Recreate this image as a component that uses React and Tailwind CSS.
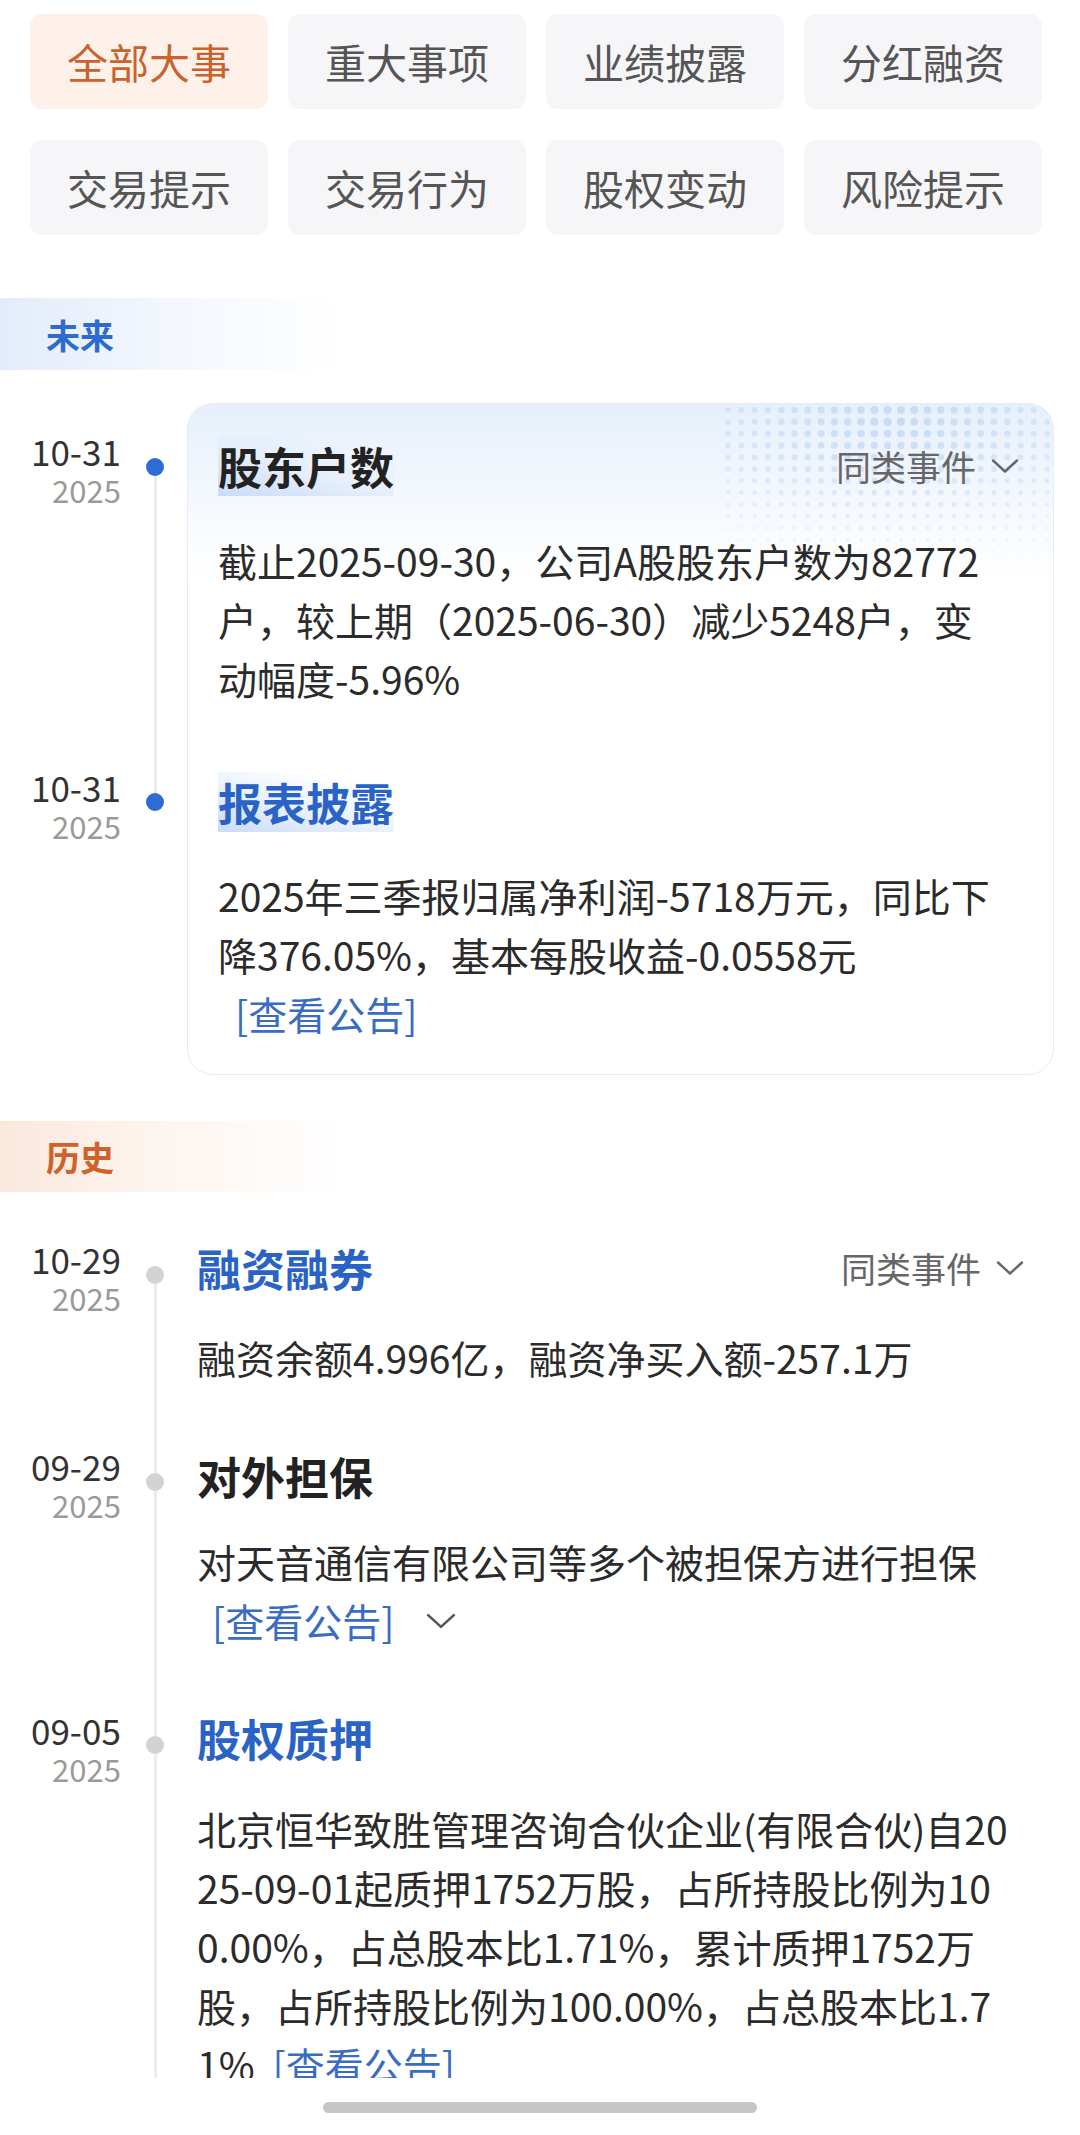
import React from "react";

const tabs = [
  ["全部大事", true],
  ["重大事项"],
  ["业绩披露"],
  ["分红融资"],
  ["交易提示"],
  ["交易行为"],
  ["股权变动"],
  ["风险提示"],
];

function Chevron({ className }) {
  return (
    <svg className={className} viewBox="0 0 28 16" fill="none">
      <polyline points="2,2.5 14,13.5 26,2.5" stroke="currentColor" strokeWidth="2.4" strokeLinecap="round" strokeLinejoin="round" />
    </svg>
  );
}

function DotField() {
  const dots = [];
  const cx = 705;
  const cy = 14;
  for (let row = 0; row < 16; row++) {
    for (let col = 0; col < 30; col++) {
      const x = 540 + col * 13.3;
      const y = 6 + row * 11.8;
      const dx = (x - cx) / 330;
      const dy = (y - cy) / 150;
      const d = Math.sqrt(dx * dx + dy * dy);
      if (d > 1) continue;
      const f = 1 - d;
      const r = 1.5 + 2.6 * f;
      dots.push(<circle key={row + "-" + col} cx={x} cy={y} r={r} fill="#bed5f2" opacity={0.1 + 0.7 * f} />);
    }
  }
  return (
    <svg className="absolute top-0 left-0 w-[867px] h-[220px] pointer-events-none" viewBox="0 0 867 220">
      {dots}
    </svg>
  );
}

function DateCell({ md, row, pt }) {
  return (
    <div className={`col-start-1 ${row} pl-[31px] ${pt}`}>
      <div className="inline-flex flex-col items-end">
        <span className="text-[35px] leading-[38px] text-[#333]">{md}</span>
        <span className="text-[31px] leading-[40px] text-[#9a9a9a]">2025</span>
      </div>
    </div>
  );
}

function Link({ className = "" }) {
  return <span className={`text-[#3a6dc2] ${className}`}>[查看公告]</span>;
}

function Similar() {
  return (
    <div className="flex items-center text-[#666] text-[35px] leading-[60px]">
      <span>同类事件</span>
      <Chevron className="w-[28px] h-[16px] ml-[15px] text-[#666]" />
    </div>
  );
}

function Lines({ lines }) {
  return (
    <div className="text-[39px] leading-[59px] text-[#2b2b2b]">
      {lines.map((l, i) => (
        <div key={i} className="whitespace-nowrap">
          {l}
        </div>
      ))}
    </div>
  );
}

function HighlightTitle({ children, blue }) {
  return (
    <span
      className={`inline-block text-[44px] leading-[60px] font-bold bg-[linear-gradient(15deg,#c9dcf7_0%,rgba(220,232,250,0.55)_45%,rgba(255,255,255,0)_80%)] ${
        blue ? "text-[#2a63c6]" : "text-[#222]"
      }`}
    >
      {children}
    </span>
  );
}

export default function App() {
  return (
    <div className="w-[1080px] h-[2135px] bg-white overflow-hidden flex flex-col font-['Noto_Sans_CJK_SC','Noto_Sans',sans-serif]">
      <div className="h-[2078px] shrink-0 overflow-hidden">
        {/* tabs */}
        <div className="pt-[14px] pl-[30px] pr-[38px] grid grid-cols-4 gap-x-[20px] gap-y-[31px]">
          {tabs.map(([t, active]) => (
            <div
              key={t}
              className={`h-[95px] rounded-[12px] flex items-center justify-center text-[41px] ${
                active ? "bg-[#fdf1e9] text-[#c9622c]" : "bg-[#f6f6f8] text-[#555]"
              }`}
            >
              {t}
            </div>
          ))}
        </div>

        {/* future band */}
        <div className="mt-[63px] h-[72px] w-[340px] pl-[46px] flex items-center bg-[linear-gradient(90deg,#e3ecfa_0%,rgba(236,242,252,0.7)_45%,rgba(255,255,255,0)_100%)]">
          <span className="text-[34px] font-bold text-[#2d6bcf]">未来</span>
        </div>

        {/* future timeline */}
        <div className="mt-[33px] grid grid-cols-[125px_62px_1fr] pr-[26px]">
          <div className="col-start-3 row-start-1 row-span-2 relative rounded-[26px] border-[1.5px] border-[#e7ecf3] overflow-hidden bg-[linear-gradient(180deg,#e6effb_0%,#f2f7fd_12%,#ffffff_26%)]">
            <DotField />
          </div>

          <DateCell md="10-31" row="row-start-1" pt="pt-[29px]" />
          <div className="col-start-2 row-start-1 pt-[55px] flex">
            <div className="ml-[21px] w-[18px] flex flex-col items-center">
              <div className="w-[18px] h-[18px] rounded-full bg-[#2f6bd6] shrink-0" />
              <div className="w-[3px] flex-1 bg-[#ececec]" />
            </div>
          </div>
          <div className="col-start-3 row-start-1 relative pt-[33px] pl-[31px] pr-[35px]">
            <div className="flex justify-between items-center h-[60px]">
              <HighlightTitle>股东户数</HighlightTitle>
              <Similar />
            </div>
            <div className="mt-[35px]">
              <Lines
                lines={[
                  "截止2025-09-30，公司A股股东户数为82772",
                  "户，较上期（2025-06-30）减少5248户，变",
                  "动幅度-5.96%",
                ]}
              />
            </div>
          </div>

          <DateCell md="10-31" row="row-start-2" pt="pt-[60px]" />
          <div className="col-start-2 row-start-2 flex">
            <div className="ml-[21px] w-[18px] flex flex-col items-center">
              <div className="w-[3px] h-[85px] bg-[#ececec]" />
              <div className="w-[18px] h-[18px] rounded-full bg-[#2f6bd6] shrink-0" />
            </div>
          </div>
          <div className="col-start-3 row-start-2 relative pt-[64px] pl-[31px] pr-[35px] pb-[32px]">
            <div className="flex items-center h-[60px]">
              <HighlightTitle blue>报表披露</HighlightTitle>
            </div>
            <div className="mt-[34px]">
              <Lines
                lines={[
                  "2025年三季报归属净利润-5718万元，同比下",
                  "降376.05%，基本每股收益-0.0558元",
                  <Link className="ml-[17px]" />,
                ]}
              />
            </div>
          </div>
        </div>

        {/* history band */}
        <div className="mt-[46px] h-[71px] w-[340px] pl-[46px] flex items-center bg-[linear-gradient(90deg,#fbe8dc_0%,rgba(252,240,232,0.7)_45%,rgba(255,255,255,0)_100%)]">
          <span className="text-[34px] font-bold text-[#d0612a]">历史</span>
        </div>

        {/* history timeline */}
        <div className="grid grid-cols-[125px_72px_1fr] pr-[56px]">
          {/* row 1 */}
          <DateCell md="10-29" row="row-start-1" pt="pt-[48px]" />
          <div className="col-start-2 row-start-1 pt-[74px] flex">
            <div className="ml-[21px] w-[18px] flex flex-col items-center">
              <div className="w-[18px] h-[18px] rounded-full bg-[#d3d3d3] shrink-0" />
              <div className="w-[3px] flex-1 bg-[#ececec]" />
            </div>
          </div>
          <div className="col-start-3 row-start-1 pt-[46px]">
            <div className="flex justify-between items-center h-[60px]">
              <span className="text-[44px] leading-[60px] font-bold text-[#2a63c6]">融资融券</span>
              <Similar />
            </div>
            <div className="mt-[30px]">
              <Lines lines={["融资余额4.996亿，融资净买入额-257.1万"]} />
            </div>
          </div>

          {/* row 2 */}
          <DateCell md="09-29" row="row-start-2" pt="pt-[60px]" />
          <div className="col-start-2 row-start-2 flex">
            <div className="ml-[21px] w-[18px] flex flex-col items-center">
              <div className="w-[3px] h-[86px] bg-[#ececec]" />
              <div className="w-[18px] h-[18px] rounded-full bg-[#d3d3d3] shrink-0" />
              <div className="w-[3px] flex-1 bg-[#ececec]" />
            </div>
          </div>
          <div className="col-start-3 row-start-2 pt-[59px]">
            <div className="flex items-center h-[60px]">
              <span className="text-[44px] leading-[60px] font-bold text-[#222]">对外担保</span>
            </div>
            <div className="mt-[26px]">
              <Lines
                lines={[
                  "对天音通信有限公司等多个被担保方进行担保",
                  <span className="inline-flex items-center">
                    <Link className="ml-[15px]" />
                    <Chevron className="w-[30px] h-[18px] ml-[32px] text-[#555]" />
                  </span>,
                ]}
              />
            </div>
          </div>

          {/* row 3 */}
          <DateCell md="09-05" row="row-start-3" pt="pt-[61px]" />
          <div className="col-start-2 row-start-3 flex">
            <div className="ml-[21px] w-[18px] flex flex-col items-center">
              <div className="w-[3px] h-[86px] bg-[#ececec]" />
              <div className="w-[18px] h-[18px] rounded-full bg-[#d3d3d3] shrink-0" />
              <div className="w-[3px] flex-1 bg-[#ececec]" />
            </div>
          </div>
          <div className="col-start-3 row-start-3 pt-[58px]">
            <div className="flex items-center h-[60px]">
              <span className="text-[44px] leading-[60px] font-bold text-[#2a63c6]">股权质押</span>
            </div>
            <div className="mt-[31px]">
              <Lines
                lines={[
                  "北京恒华致胜管理咨询合伙企业(有限合伙)自20",
                  "25-09-01起质押1752万股，占所持股比例为10",
                  "0.00%，占总股本比1.71%，累计质押1752万",
                  "股，占所持股比例为100.00%，占总股本比1.7",
                  <span>
                    1%<Link className="ml-[18px]" />
                  </span>,
                ]}
              />
            </div>
          </div>
        </div>
      </div>

      <div className="flex-1 flex justify-center pt-[24px]">
        <div className="w-[434px] h-[11px] rounded-full bg-[#c6c6c6]" />
      </div>
    </div>
  );
}
